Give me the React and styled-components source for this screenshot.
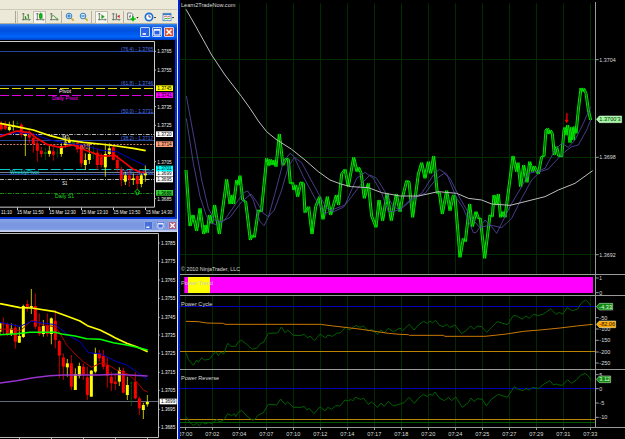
import React from 'react';
import styled, { createGlobalStyle } from 'styled-components';

const GlobalStyle = createGlobalStyle`
  body {
    margin: 0;
    background: #000;
    overflow: hidden;
  }
  * {
    box-sizing: border-box;
  }
`;
const Desktop = styled.div`
  display: flex;
  width: 625px;
  height: 439px;
  overflow: hidden;
  background: #000;
  font-family: 'Liberation Sans', Arial, sans-serif;
`;
const Terminal = styled.div`
  display: flex;
  flex-direction: column;
  flex: none;
  width: 178px;
  border-right: 1px solid #e8ecff;
`;
const Menu = styled.div`
  flex: none;
  height: 9px;
  background: #ece9d8;
`;
const Toolbar = styled.div`
  display: flex;
  flex: none;
  align-items: center;
  height: 15px;
  padding: 1px 0 0 14px;
  background: #ece9d8;
  border-top: 1px solid #cdc9b8;
  border-bottom: 1px solid #b3b0a0;
`;
const Handle = styled.div`
  width: 3px;
  height: 12px;
  margin-left: 1px;
  border-left: 1px solid #aaa797;
  border-right: 1px solid #c8c5b6;
`;
const Separator = styled.div`
  width: 1px;
  height: 12px;
  background: #b5b2a2;
`;
const Tool = styled.div`
  display: flex;
  flex: none;
  align-items: center;
  justify-content: center;
  width: ${p => p.$width || 14}px;
  height: 13px;
  background: ${p => (p.$pressed ? '#f8f7f1' : 'transparent')};
  border: 1px solid ${p => (p.$pressed ? '#c2bfb0' : 'transparent')};

  svg {
    flex: none;
    width: 10px;
    height: 10px;
  }
`;
const Caret = styled.div`
  width: 3px;
  height: 2px;
  margin-top: 1px;
  background: #222;
  clip-path: polygon(0 0, 100% 0, 50% 100%);
  flex: none;
`;
const Window = styled.div`
  flex: none;
  width: 177px;
  height: ${p => p.$height}px;
  background: ${p => (p.$active ? '#0031d6' : '#000')};
`;
const TitleBar = styled.div`
  display: flex;
  align-items: center;
  justify-content: flex-end;
  gap: ${p => (p.$active ? 2 : 3)}px;
  height: ${p => (p.$active ? 16 : 13)}px;
  padding-right: ${p => (p.$active ? 3 : 0)}px;
  background: ${p =>
    p.$active
      ? 'linear-gradient(#3a86ee, #0b5be4 20%, #0050dc 40%, #0064fc 80%, #0040c8)'
      : 'linear-gradient(#8aa6e8, #7a96df 40%, #7d9ae4 80%, #c5cfee 90%)'};
`;
const TitleButton = styled.div`
  display: flex;
  width: ${p => (p.$active ? 10 : 9)}px;
  height: ${p => (p.$active ? 10 : 9)}px;
  border: 1px solid ${p => (p.$active ? '#c5d6fa' : '#8fa5e4')};
  border-radius: 1px;
  background: ${p => p.$color};

  svg {
    width: 100%;
    height: 100%;
  }
`;
const Canvas = styled.svg`
  display: block;
  width: ${p => p.$width}px;
  height: ${p => p.$height}px;
  background: #000;
`;
const Trader = styled.div`
  display: flex;
  flex-direction: column;
  flex: none;
  width: 447px;
  border-left: 2px solid #0020c8;
`;
const Panel = styled.div`
  flex: none;
  height: ${p => p.$height}px;
  border-bottom: ${p => (p.$last ? 0 : 1)}px solid #999;
  overflow: hidden;
`;

const TONES = { r: '#f00', y: '#ff0', g: '#006400' };

// x, high, body top, body bottom, low, tone
const UPPER_CANDLES = [
  [4, 33, 42, 58, 62, 'r'], [16, 33, 42, 56, 60, 'r'], [28, 35, 50, 60, 64, 'y'],
  [40, 32, 46, 50, 62, 'y'], [52, 33, 40, 42, 48, 'g'], [64, 38, 44, 75, 82, 'r'],
  [76, 70, 74, 78, 138, 'y'], [88, 60, 75, 83, 100, 'r'], [100, 70, 84, 102, 128, 'r'],
  [112, 88, 100, 122, 155, 'r'], [124, 110, 122, 132, 142, 'r'], [136, 112, 126, 132, 150, 'g'],
  [148, 108, 122, 132, 140, 'y'], [160, 110, 124, 134, 152, 'r'], [172, 115, 128, 130, 142, 'g'],
  [184, 100, 108, 132, 140, 'y'], [196, 78, 95, 105, 112, 'y'], [208, 82, 93, 98, 108, 'y'],
  [220, 88, 96, 103, 106, 'g'], [232, 90, 98, 118, 128, 'r'], [244, 100, 105, 160, 172, 'r'],
  [256, 130, 150, 165, 180, 'y'], [268, 100, 132, 150, 162, 'y'], [280, 108, 128, 132, 148, 'g'],
  [292, 115, 128, 165, 180, 'r'], [304, 130, 140, 165, 172, 'r'], [316, 100, 132, 172, 200, 'y'],
  [328, 100, 115, 132, 140, 'y'], [340, 108, 112, 150, 152, 'r'], [352, 135, 150, 175, 185, 'r'],
  [364, 170, 178, 208, 228, 'r'], [376, 185, 196, 215, 225, 'y'], [388, 180, 196, 208, 230, 'r'],
  [400, 190, 205, 210, 225, 'y'], [412, 190, 198, 222, 238, 'r'], [424, 190, 196, 222, 232, 'y'],
  [436, 165, 188, 196, 215, 'y'],
];
const LOWER_CANDLES = [
  [0, 278, 280, 305, 315, 'y'], [10, 262, 280, 283, 312, 'r'], [22, 278, 282, 312, 318, 'r'],
  [34, 280, 296, 312, 318, 'y'], [46, 282, 293, 335, 356, 'r'], [58, 290, 318, 338, 339, 'y'],
  [70, 224, 228, 321, 324, 'y'], [82, 210, 222, 233, 245, 'r'], [94, 177, 228, 233, 252, 'y'],
  [106, 190, 228, 290, 297, 'r'], [118, 250, 290, 312, 318, 'r'], [130, 270, 288, 312, 320, 'y'],
  [142, 250, 285, 312, 320, 'r'], [154, 262, 265, 312, 343, 'y'], [166, 240, 272, 330, 355, 'r'],
  [178, 330, 333, 377, 444, 'r'], [190, 370, 382, 410, 450, 'r'], [202, 387, 400, 412, 440, 'y'],
  [214, 375, 400, 470, 480, 'r'], [226, 415, 432, 480, 480, 'y'], [238, 398, 408, 438, 445, 'y'],
  [250, 400, 410, 435, 450, 'r'], [262, 410, 442, 495, 510, 'r'], [274, 420, 422, 500, 500, 'y'],
  [286, 353, 370, 425, 430, 'y'], [298, 360, 370, 385, 395, 'r'], [310, 360, 377, 410, 418, 'r'],
  [322, 382, 405, 437, 473, 'r'], [334, 425, 440, 460, 483, 'r'], [346, 435, 455, 462, 480, 'r'],
  [358, 412, 420, 455, 468, 'y'], [370, 413, 422, 488, 490, 'r'], [382, 440, 465, 495, 510, 'y'],
  [394, 455, 458, 460, 528, 'g'], [406, 427, 455, 505, 508, 'r'], [418, 500, 505, 535, 555, 'r'],
  [430, 518, 525, 540, 567, 'y'], [442, 495, 516, 523, 530, 'y'],
];

const PRICE =
  '33,120 45,288 54,255 65,303 75,235 86,312 93,285 97,308 103,255 110,280 119,225 133,312 155,148 165,222 172,195 176,222 185,150 190,165 195,137 203,210 212,215 226,330 232,315 238,322 250,240 259,245 275,85 282,107 287,88 294,105 299,90 303,110 313,12 324,106 333,85 340,88 346,160 353,158 357,180 362,165 368,200 378,156 385,160 390,248 401,230 411,312 422,230 434,200 444,268 457,200 467,255 484,195 491,225 500,132 510,118 520,170 536,82 546,125 551,112 558,128 568,205 580,160 590,258 603,292 612,210 623,272 636,190 649,272 664,192 675,245 683,200 695,152 702,155 713,262 730,132 740,98 750,145 760,95 767,130 776,78 787,190 793,188 802,252 815,182 825,242 835,195 840,200 855,382 865,325 871,335 884,222 892,290 903,245 910,265 916,265 929,385 945,255 952,260 957,195 964,225 970,192 977,262 984,245 990,262 1014,78 1025,125 1029,98 1037,170 1046,105 1056,157 1064,95 1073,125 1078,108 1090,132 1100,80 1107,78 1113,0 1118,-5 1122,12 1126,0 1132,10 1138,75 1145,50 1151,78 1160,80 1167,0 1170,-8 1173,15 1178,-15 1185,38 1190,-8 1195,30 1199,-10 1203,10 1210,-60 1218,-126 1222,-115 1226,-125 1233,-110 1240,-60 1247,-30';
const AVERAGE_FAST =
  '34,-35 55,100 75,200 95,260 110,280 125,284 150,268 180,225 205,188 218,183 235,210 255,275 267,287 280,262 300,190 325,95 345,70 357,80 385,140 420,205 450,252 470,240 510,225 545,145 570,127 595,145 620,190 640,245 660,243 675,238 710,205 740,190 775,135 793,118 815,132 845,205 865,235 895,308 903,308 930,270 950,290 965,310 980,280 1010,220 1040,170 1060,130 1085,125 1110,115 1140,60 1160,40 1180,52 1200,30 1225,-20 1247,-70';
const AVERAGE_SLOW =
  '34,-102 60,40 80,150 100,235 118,270 140,275 165,262 200,215 228,192 245,215 265,250 280,260 298,240 320,180 340,110 358,82 380,98 400,135 430,190 455,235 475,245 505,232 530,200 560,160 585,135 605,145 630,185 655,230 675,240 715,205 750,190 785,145 808,130 825,145 855,205 890,265 915,293 945,285 980,293 1010,265 1040,205 1070,150 1095,125 1120,117 1145,90 1170,65 1190,50 1210,45 1235,0 1247,-30';
const BASELINE =
  '33,28 60,75 110,165 150,225 200,290 225,325 250,363 275,395 303,418 350,448 390,480 430,515 465,540 500,553 530,560 580,563 620,578 675,588 730,588 790,575 845,580 880,595 920,600 950,612 1005,616 1050,605 1110,590 1150,570 1200,550 1253,512';
const CYCLE =
  '33,248 40,268 55,286 65,270 70,277 80,263 88,270 103,268 112,256 122,245 130,257 138,246 146,252 158,220 168,229 182,229 190,215 200,211 215,223 232,238 247,233 257,220 265,218 280,190 308,189 319,171 330,188 338,180 355,196 375,197 388,193 398,204 405,198 418,212 435,192 452,204 458,195 472,199 485,190 497,188 513,170 522,180 530,176 543,166 555,172 565,168 580,183 590,178 608,193 618,180 628,188 640,175 655,185 675,174 683,182 703,163 717,180 730,165 745,154 757,160 765,153 772,158 782,151 793,166 805,170 815,163 825,172 840,165 860,191 875,180 887,168 897,178 907,168 920,170 935,187 950,172 967,155 997,164 1015,137 1027,138 1041,148 1053,138 1063,145 1075,133 1090,137 1105,132 1127,117 1143,133 1153,127 1163,133 1177,112 1190,122 1207,118 1220,98 1232,90 1240,97 1247,108';
const CYCLE_SIGNAL =
  '33,154 70,155 95,159 145,160 150,163 436,163 475,168 510,172 560,178 600,184 640,190 675,193 700,194 703,196 805,196 810,199 930,199 995,192 1045,184 1095,180 1155,174 1205,168 1253,163';
const REVERSE =
  '33,440 45,458 55,466 65,460 73,467 82,456 90,462 100,458 112,460 125,448 135,456 148,448 158,431 170,437 178,431 182,440 190,427 200,421 215,438 232,450 240,448 250,435 265,428 280,403 305,405 317,387 330,403 338,396 355,412 378,412 388,409 396,420 402,415 417,431 435,410 450,423 458,412 470,418 482,407 495,408 510,390 520,393 528,388 533,393 542,381 556,388 566,385 580,403 590,396 608,412 618,399 628,409 640,394 655,408 675,402 687,398 702,382 718,400 730,385 745,373 757,380 765,372 772,377 780,366 792,383 808,392 820,382 830,392 842,381 862,412 880,398 888,384 897,395 907,386 922,388 934,408 950,387 970,373 997,382 1018,350 1030,358 1045,362 1053,355 1063,360 1073,352 1090,356 1107,342 1125,332 1135,345 1145,342 1155,346 1163,345 1178,329 1190,340 1205,329 1217,316 1230,310 1240,318 1248,330';

const TIMES = [
  '07:00', '07:02', '07:04', '07:07', '07:10', '07:12', '07:14', '07:17',
  '07:18', '07:20', '07:24', '07:25', '07:27', '07:29', '07:31', '07:33',
];

const Line = ({ points, color, width = 3, shift = 0 }) => (
  <polyline
    points={points}
    fill="none"
    stroke={color}
    strokeWidth={width}
    strokeLinejoin="round"
    transform={`translate(${shift} 0)`}
  />
);

const Level = ({ y, color, to, from = 0, dash, width = 3 }) => (
  <line x1={from} x2={to} y1={y} y2={y} stroke={color} strokeWidth={width} strokeDasharray={dash} />
);

const Label = ({ x, y, length, color = '#ddd', size = 18, children, anchor }) => (
  <text
    x={x}
    y={y}
    fill={color}
    fontSize={size}
    textLength={length}
    lengthAdjust="spacingAndGlyphs"
    textAnchor={anchor}
  >
    {children}
  </text>
);

const Candles = ({ data }) =>
  data.map(([x, high, top, bottom, low, tone]) => (
    <g key={x} fill={TONES[tone]}>
      <rect x={x - 1.5} y={high} width="3" height={low - high} opacity="0.75" />
      <rect x={x - 4.5} y={top} width="9" height={bottom - top} />
    </g>
  ));

const PriceMark = ({ x, y, children }) => (
  <g>
    <Level y={y} from={x - 9} to={x - 4} color="#bbb" />
    <Label x={x} y={y + 6} length={43} color="#eee" size={18}>{children}</Label>
  </g>
);

const PriceTag = ({ x, y, color, text = '#000', children }) => (
  <g>
    <rect x={x - 4} y={y - 8} width="51" height="17" fill={color} />
    <Label x={x} y={y + 6} length={43} color={text} size={17}>{children}</Label>
  </g>
);

const ArrowTag = ({ y, width, color, text, length, children }) => (
  <g>
    <path
      d={`M1264 ${y} l9 -10 h${width - 9} v20 h-${width - 9} z`}
      fill={color}
      stroke="#dfffdf"
      strokeWidth="1.5"
    />
    <Label x={1273} y={y + 6} length={length} color={text}>{children}</Label>
  </g>
);

const Grid = ({ top, bottom, color = '#002d00' }) =>
  TIMES.map((t, i) => (
    <line
      key={t}
      x1={31.5 + i * 81}
      x2={31.5 + i * 81}
      y1={top}
      y2={bottom}
      stroke={color}
      strokeWidth="3"
    />
  ));

const Axis = ({ top, bottom }) => (
  <line x1="1261.5" x2="1261.5" y1={top} y2={bottom} stroke="#999" strokeWidth="3" />
);

const Ticks = ({ marks }) =>
  marks.map(([y, label, length]) => (
    <g key={label}>
      <Level y={y} from={1263} to={1271} color="#999" />
      <Label x={1273} y={y + 6} length={length}>{label}</Label>
    </g>
  ));

const Icon = ({ children }) => (
  <svg viewBox="0 0 30 30" fill="none" stroke="#4b5a4b" strokeWidth="2.5">{children}</svg>
);

const Axes = () => <path d="M7 4v21M3 23h24M4 7l3-4 3 4M24 20l3 3-3 3" stroke="#5d6a5d" />;

const Magnifier = ({ plus }) => (
  <Icon>
    <path d="M18 18l8 8" stroke="#d6a52c" strokeWidth="5" />
    <circle cx="12" cy="12" r="8.5" fill="#d5ecff" stroke="#3b83c0" strokeWidth="3" />
    <path d={plus ? 'M7 12h10M12 7v10' : 'M7 12h10'} stroke="#1769b5" strokeWidth="3" />
  </Icon>
);

const ToolbarIcons = () => (
  <Toolbar>
    <Handle />
    <Tool $width={15}>
      <Icon><Axes /><path d="M13 12v9M13 19h4M22 7v13M18 9h4" stroke="#149014" strokeWidth="3" /></Icon>
    </Tool>
    <Tool $width={13} $pressed>
      <Icon><Axes /><path d="M17 2v20" stroke="#149014" /><rect x="14" y="6" width="7" height="12" fill="#1c1" stroke="#080" /></Icon>
    </Tool>
    <Tool $width={15}>
      <Icon><Axes /><path d="M7 15c5-7 9-4 11 0s4 4 8 4" stroke="#149014" /></Icon>
    </Tool>
    <Separator />
    <Tool $width={15}><Magnifier plus /></Tool>
    <Tool $width={14}><Magnifier /></Tool>
    <Separator />
    <Tool $width={3} />
    <Tool $width={13} $pressed>
      <Icon><Axes /><path d="M14 8l8 6-8 6z" fill="#1a1" stroke="#080" strokeWidth="1" /></Icon>
    </Tool>
    <Tool $width={15}>
      <Icon><Axes /><path d="M16 4v17" stroke="#257" /><path d="M26 8l-8 5 8 5z" fill="#d22" stroke="none" /></Icon>
    </Tool>
    <Separator />
    <Tool $width={17}>
      <Icon>
        <path d="M5 3h11l4 4v16H5z" fill="#fff" stroke="#667" />
        <path d="M9 19c4-2 2-11 6-11M9 13h6" strokeWidth="2" />
        <path d="M21 13v15M13 21h16" stroke="#0b0" strokeWidth="5" />
      </Icon>
      <Caret />
    </Tool>
    <Tool $width={18}>
      <Icon>
        <circle cx="15" cy="15" r="11" fill="#fff" stroke="#1d6fd0" strokeWidth="5" />
        <path d="M15 8v7h6" stroke="#335" />
      </Icon>
      <Caret />
    </Tool>
    <Tool $width={18}>
      <Icon>
        <rect x="3" y="4" width="24" height="22" fill="#fff" stroke="#4d82bd" />
        <path d="M3 7h24" stroke="#3a78c4" strokeWidth="5" />
        <path d="M6 15l6-3 5 3 7-3" stroke="#c44" />
        <path d="M6 22l6-3 5 2 7-3" stroke="#292" />
      </Icon>
      <Caret />
    </Tool>
  </Toolbar>
);

const WindowTitle = ({ active }) => (
  <TitleBar $active={active}>
    <TitleButton $active={active} $color={active ? '#2a62e8' : '#4870da'}>
      <svg viewBox="0 0 8 8"><path d="M1.5 6h3.5" stroke="#fff" strokeWidth="1.6" /></svg>
    </TitleButton>
    <TitleButton $active={active} $color={active ? '#2a62e8' : '#4870da'}>
      <svg viewBox="0 0 8 8"><path d="M1 1.5h6v5.5h-6zM1 2.2h6" fill="none" stroke="#fff" /></svg>
    </TitleButton>
    <TitleButton $active={active} $color={active ? '#e0522e' : '#b0607c'}>
      <svg viewBox="0 0 8 8"><path d="M1.5 1.5l5 5M6.5 1.5l-5 5" stroke="#fff" strokeWidth="1.5" /></svg>
    </TitleButton>
  </TitleBar>
);

const FIB = '#4a74ea';

const UpperChart = () => (
  <Canvas $width={175} $height={177} viewBox="0 120 525 531">
    <Level y={154.5} to={463} color="#27439a" />
    <Level y={256.5} to={463} color="#27439a" />
    <Level y={340.5} to={463} color="#27439a" />
    <Level y={421.5} to={463} color="#27439a" />
    <Level y={517.5} to={463} color="#708090" />
    <Level y={523.5} to={463} color="#27439a" />
    <Level y={265.5} to={463} color="#dddd00" dash="27 9" />
    <Level y={286.5} to={463} color="#e000e0" dash="27 9" />
    <Level y={403.5} to={463} color="#ddd" dash="12 4 3 4" width={2.5} />
    <Level y={433.5} to={463} color="#e9967a" dash="6 4" width={2.5} />
    <Level y={508.5} to={463} color="#00c8c8" dash="30 8" />
    <Level y={538.5} to={463} color="#ddd" dash="12 4 3 4" width={2.5} />
    <Level y={580.5} to={463} color="#1fa01f" dash="12 4 3 4" width={2.5} />
    <g transform="translate(0 330)">
      <Candles data={UPPER_CANDLES} />
      <Line points="0,75 60,68 100,72 150,90 200,100 250,105 300,120 350,125 400,150 437,167" color="#0000c8" />
      <Line
        points="0,80 50,63 90,68 110,85 140,103 180,112 220,105 240,115 270,125 300,137 320,138 345,136 370,155 400,178 420,186 437,188"
        color="#f00"
        width={5}
      />
      <Line
        points="0,40 50,50 100,60 150,77 200,90 250,97 300,102 350,108 400,115 437,122"
        color="#ff0"
        width={5}
      />
      <path d="M412 237l8 9h-5v8h-6v-8h-5z" fill="none" stroke="#0d0" strokeWidth="2.5" />
    </g>
    <Label x={363} y={152} length={97} color={FIB}>(76.4) - 1.3765</Label>
    <Label x={363} y={254} length={97} color={FIB}>(61.8) - 1.3746</Label>
    <Label x={363} y={338} length={97} color={FIB}>(50.0) - 1.3731</Label>
    <Label x={363} y={419} length={97} color={FIB}>(38.2) - 1.3717</Label>
    <Label x={363} y={521} length={97} color={FIB}>(23.6) - 1.3700</Label>
    <Label x={177} y={280} length={36} color="#fff">Pivot</Label>
    <Label x={156} y={301} length={77} color="#f0f">Daily Pivot</Label>
    <Label x={187} y={416} length={20} color="#ddd">M3</Label>
    <Label x={240} y={446} length={30} color="#e9967a">(M2)</Label>
    <Label x={30} y={522} length={87} color="#00e5e5">WeeklyPivot</Label>
    <Label x={187} y={555} length={15} color="#fff">S1</Label>
    <Label x={165} y={594} length={57} color="#2d2">Daily S1</Label>
    <path d="M0 124.5H463.5V621.5H0" fill="none" stroke="#ccc" strokeWidth="3" />
    <PriceMark x={472} y={154}>1.3765</PriceMark>
    <PriceMark x={472} y={210}>1.3755</PriceMark>
    <PriceMark x={472} y={320}>1.3735</PriceMark>
    <PriceMark x={472} y={376}>1.3725</PriceMark>
    <PriceMark x={472} y={485}>1.3705</PriceMark>
    <PriceMark x={472} y={596}>1.3685</PriceMark>
    <PriceTag x={472} y={264} color="#ff0">1.3745</PriceTag>
    <PriceTag x={472} y={285} color="#f0f">1.3741</PriceTag>
    <PriceTag x={472} y={402} color="#fff">1.3720</PriceTag>
    <PriceTag x={472} y={432} color="#ffa07a">1.3714</PriceTag>
    <PriceTag x={472} y={520} color="#fff">1.3699</PriceTag>
    <PriceTag x={472} y={505} color="#0ff">1.3701</PriceTag>
    <PriceTag x={472} y={538} color="#fff">1.3695</PriceTag>
    <PriceTag x={472} y={578} color="#32cd32">1.3688</PriceTag>
    <Label x={3} y={642} length={33} color="#eee">11:10</Label>
    {['11:50', '12:30', '13:10', '13:50', '14:30'].map((t, i) => (
      <g key={t}>
        <line x1={52.5 + i * 96} x2={52.5 + i * 96} y1="622" y2="630" stroke="#ccc" strokeWidth="3" />
        <Label x={51 + i * 96.5} y={642} length={80} color="#eee">{`15 Mar ${t}`}</Label>
      </g>
    ))}
  </Canvas>
);

const LOWER_MARKS = [
  [39, '1.3785'], [94, '1.3775'], [150, '1.3765'], [205, '1.3755'], [262, '1.3745'], [315, '1.3735'],
  [370, '1.3725'], [427, '1.3715'], [481, '1.3705'], [538, '1.3695'], [592, '1.3685'],
];

const LowerChart = () => (
  <Canvas $width={177} $height={207} viewBox="0 6 531 621">
    <Level y={514.5} to={476} color="#5d6b7a" />
    <Candles data={LOWER_CANDLES} />
    <Line
      points="0,298 30,297 60,303 80,285 95,271 130,285 165,290 180,310 200,345 225,372 250,395 275,412 300,400 320,402 350,420 385,433 410,455 430,480 443,486"
      color="#b00000"
    />
    <Line
      points="0,277 30,283 60,289 95,274 130,279 165,284 185,300 210,319 240,335 265,368 300,371 345,393 380,405 410,425 443,449"
      color="#0000c8"
    />
    <Line
      points="0,459 50,452 100,443 150,437 190,435 300,435 350,433 400,436 443,438"
      color="#9932cc"
      width={4.5}
    />
    <Line
      points="0,221 60,233 95,234 165,245 200,258 240,273 262,287 300,300 330,315 345,323 380,340 410,350 443,365"
      color="#ff0"
      width={5}
    />
    <Line
      points="0,314 50,311 90,307 165,307 185,312 225,318 260,326 300,328 340,338 380,345 410,352 443,360"
      color="#0f0"
      width={4.5}
    />
    <path d="M0 10.5H475.5V622.5H0" fill="none" stroke="#bbb" strokeWidth="3" />
    {[58.5, 154.5, 250.5, 346.5, 442.5].map(x => (
      <line key={x} x1={x} x2={x} y1="622" y2="628" stroke="#bbb" strokeWidth="3" />
    ))}
    {LOWER_MARKS.map(([y, price]) => <PriceMark key={price} x={483} y={y}>{price}</PriceMark>)}
    <PriceTag x={483} y={514} color="#fff">1.3699</PriceTag>
  </Canvas>
);

const App = () => (
  <>
    <GlobalStyle />
    <Desktop>
      <Terminal>
        <Menu />
        <ToolbarIcons />
        <Window $active $height={195}>
          <WindowTitle active />
          <UpperChart />
        </Window>
        <Window $height={220}>
          <WindowTitle />
          <LowerChart />
        </Window>
      </Terminal>
      <Trader>
        <Panel $height={275}>
          <Canvas $width={445} $height={274} viewBox="15 0 1335 822">
            <Grid top={10} bottom={822} />
            <Level y={178.5} from={15} to={1260} color="#002d00" />
            <Level y={472.5} from={15} to={1260} color="#002d00" />
            <Level y={763.5} from={15} to={1260} color="#002d00" />
            <g transform="translate(0 390)">
              <Line points={PRICE} color="#004800" width={5} />
              <Line points={PRICE} color="#00e600" shift={-3} />
              <Line points={PRICE} color="#00e600" shift={3} />
              <Line points={AVERAGE_FAST} color="#5548a4" width={2.5} />
              <Line points={AVERAGE_SLOW} color="#5548a4" width={2.5} />
            </g>
            <Line points={BASELINE} color="#bdbdbd" />
            <path d="M1174 340v20h-4l5 9 5-9h-3v-20z" fill="#f00" stroke="#f00" />
            <Axis top={6} bottom={822} />
            <Label x={18} y={22} length={163}>Learn2TradeNow.com</Label>
            <Label x={18} y={814} length={177}>© 2010 NinjaTrader, LLC</Label>
            <Ticks marks={[[179, '1.3704', 49], [472, '1.3698', 49], [764, '1.3692', 49]]} />
            <ArrowTag y={358} width={76} color="#a4f8a4" text="#042a04" length={64}>{"1.3700'3"}</ArrowTag>
          </Canvas>
        </Panel>
        <Panel $height={21}>
          <Canvas $width={445} $height={20} viewBox="15 15 1335 60">
            <rect x="28" y="21" width="1226" height="48" fill="#f0f" />
            <rect x="39" y="21" width="66" height="48" fill="#ff0" />
            <Label x={18} y={45} length={96} color="#ccc">Power Trend</Label>
            <Axis top={15} bottom={76} />
            <Ticks marks={[[24, '1', 8], [68, '0', 9]]} />
          </Canvas>
        </Panel>
        <Panel $height={74}>
          <Canvas $width={445} $height={73} viewBox="15 78 1335 219">
            <Grid top={78} bottom={300} />
            <Level y={109.5} from={15} to={1260} color="#0000b8" />
            <Level y={244.5} from={15} to={1260} color="#b88600" />
            <Line points={CYCLE} color="#006000" />
            <Line points={CYCLE_SIGNAL} color="#c87800" />
            <Axis top={78} bottom={300} />
            <Label x={18} y={109} length={94}>Power Cycle</Label>
            <Ticks
              marks={[[143, '-50', 24], [177, '-100', 33], [211, '-150', 33], [246, '-200', 33], [279, '-250', 33]]}
            />
            <ArrowTag y={110} width={49} color="#108810" text="#e8ffe8" length={38}>-4.33</ArrowTag>
            <ArrowTag y={163} width={58} color="#ffa500" text="#241400" length={47}>-82.06</ArrowTag>
          </Canvas>
        </Panel>
        <Panel $height={58}>
          <Canvas $width={445} $height={57} viewBox="15 300 1335 171">
            <Grid top={300} bottom={474} />
            <Level y={355.5} from={15} to={1260} color="#0000b8" />
            <Level y={448.5} from={15} to={1260} color="#b88600" />
            <Level y={457.5} from={15} to={1260} color="#005a00" />
            <Line points={REVERSE} color="#006000" />
            <Axis top={300} bottom={474} />
            <Label x={18} y={330} length={114}>Power Reverse</Label>
            <Ticks marks={[[314, '5', 9], [356, '0', 9], [399, '-5', 15], [442, '-10', 24]]} />
            <ArrowTag y={328} width={43} color="#108810" text="#e8ffe8" length={32}>3.12</ArrowTag>
          </Canvas>
        </Panel>
        <Panel $height={11} $last>
          <Canvas $width={445} $height={11} viewBox="15 474 1335 33">
            {TIMES.map((t, i) => (
              <g key={t}>
                <line x1={31.5 + i * 81} x2={31.5 + i * 81} y1="474" y2="480" stroke="#999" strokeWidth="3" />
                <Label x={31 + i * 81} y={498} length={42} anchor="middle">{t}</Label>
              </g>
            ))}
          </Canvas>
        </Panel>
      </Trader>
    </Desktop>
  </>
);

export default App;
